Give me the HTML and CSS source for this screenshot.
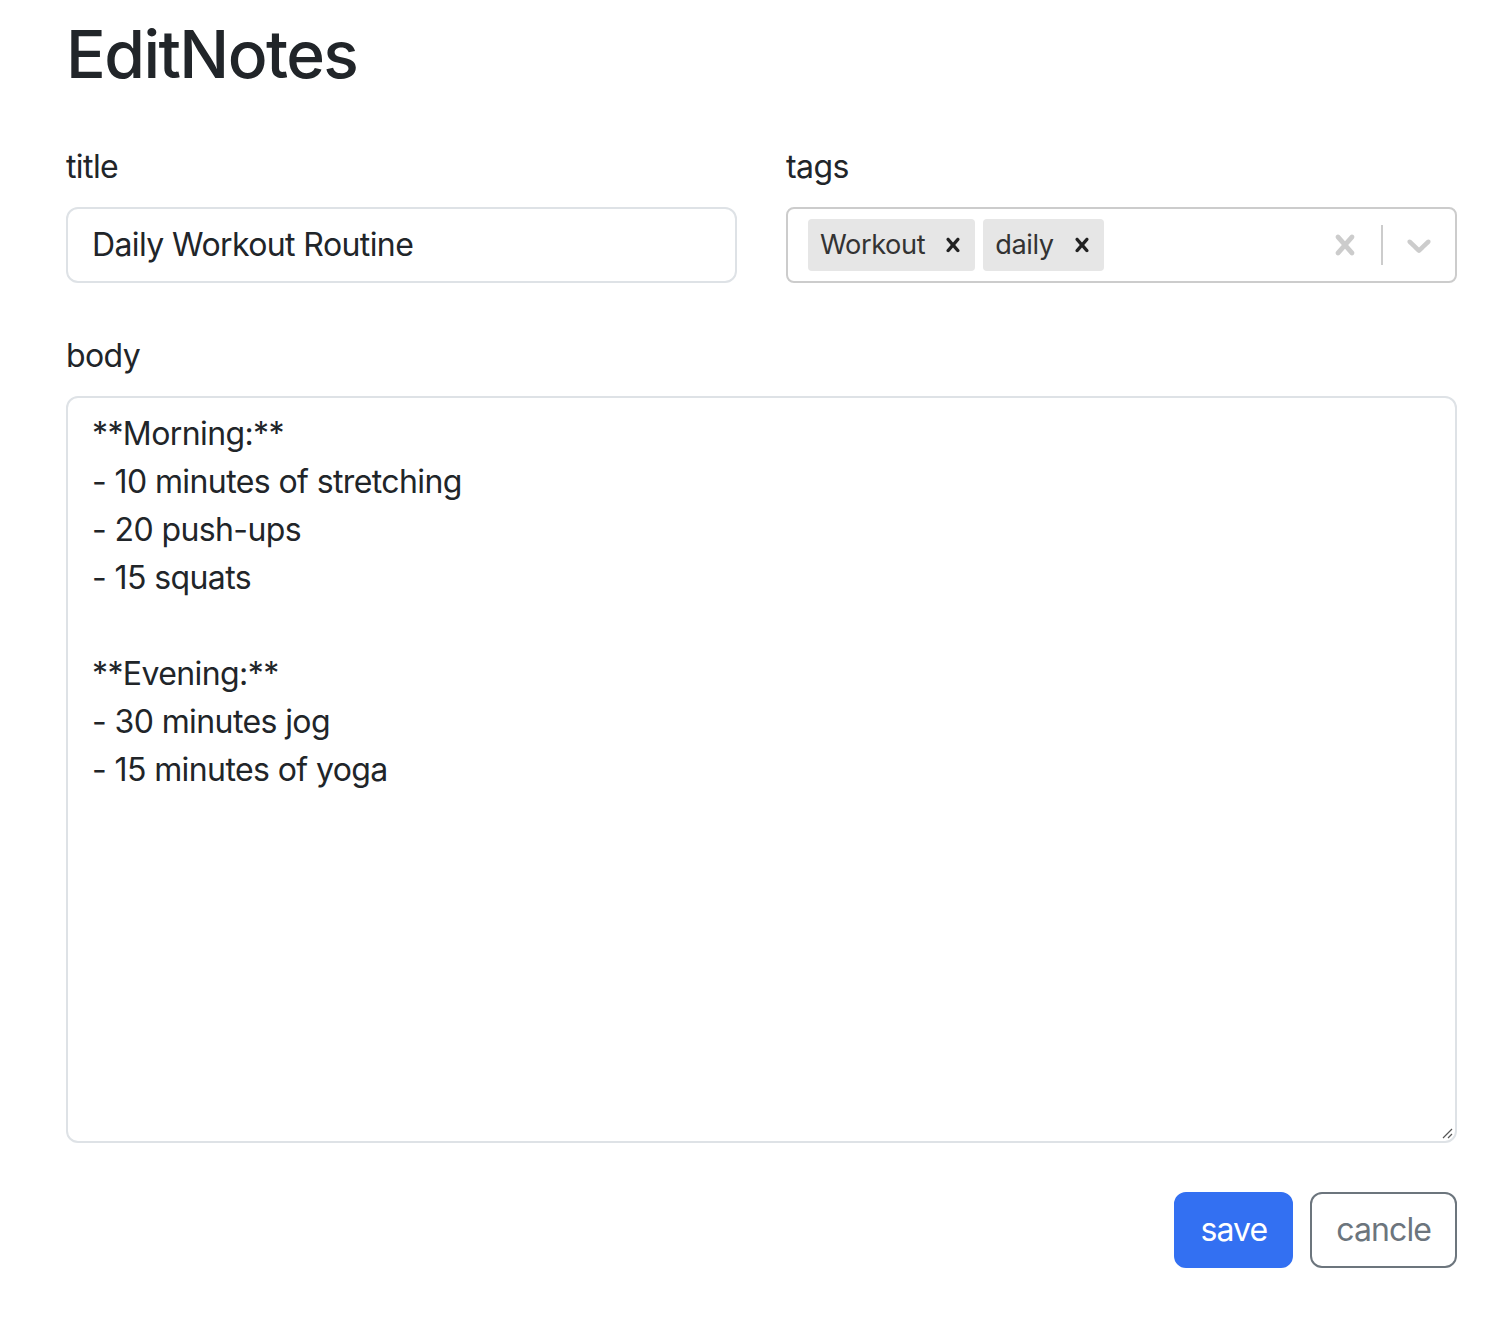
FILE: index.html
```html
<!DOCTYPE html>
<html lang="en">
<head>
<meta charset="utf-8">
<title>EditNotes</title>
<link rel="stylesheet" href="styles.css">
</head>
<body>
<div class="page">
  <h1 class="heading">EditNotes</h1>
  <div class="row">
    <div class="col">
      <label class="label">title</label>
      <div class="input">Daily Workout Routine</div>
    </div>
    <div class="col">
      <label class="label">tags</label>
      <div class="select">
        <div class="values">
          <div class="chip">
            <span class="chip-label">Workout</span>
            <span class="chip-remove"><svg viewBox="0 0 20 20" width="28" height="28"><path d="M14.348 14.849c-0.469 0.469-1.229 0.469-1.697 0l-2.651-3.030-2.651 3.029c-0.469 0.469-1.229 0.469-1.697 0-0.469-0.469-0.469-1.229 0-1.697l2.758-3.15-2.759-3.152c-0.469-0.469-0.469-1.228 0-1.697s1.228-0.469 1.697 0l2.652 3.031 2.651-3.031c0.469-0.469 1.228-0.469 1.697 0s0.469 1.229 0 1.697l-2.758 3.152 2.758 3.15c0.469 0.469 0.469 1.229 0 1.698z"/></svg></span>
          </div>
          <div class="chip">
            <span class="chip-label">daily</span>
            <span class="chip-remove"><svg viewBox="0 0 20 20" width="28" height="28"><path d="M14.348 14.849c-0.469 0.469-1.229 0.469-1.697 0l-2.651-3.030-2.651 3.029c-0.469 0.469-1.229 0.469-1.697 0-0.469-0.469-0.469-1.229 0-1.697l2.758-3.15-2.759-3.152c-0.469-0.469-0.469-1.228 0-1.697s1.228-0.469 1.697 0l2.652 3.031 2.651-3.031c0.469-0.469 1.228-0.469 1.697 0s0.469 1.229 0 1.697l-2.758 3.152 2.758 3.15c0.469 0.469 0.469 1.229 0 1.698z"/></svg></span>
          </div>
        </div>
        <div class="indicators">
          <span class="indicator"><svg viewBox="0 0 20 20" width="40" height="40"><path d="M14.348 14.849c-0.469 0.469-1.229 0.469-1.697 0l-2.651-3.030-2.651 3.029c-0.469 0.469-1.229 0.469-1.697 0-0.469-0.469-0.469-1.229 0-1.697l2.758-3.15-2.759-3.152c-0.469-0.469-0.469-1.228 0-1.697s1.228-0.469 1.697 0l2.652 3.031 2.651-3.031c0.469-0.469 1.228-0.469 1.697 0s0.469 1.229 0 1.697l-2.758 3.152 2.758 3.15c0.469 0.469 0.469 1.229 0 1.698z"/></svg></span>
          <span class="separator"></span>
          <span class="indicator"><svg viewBox="0 0 20 20" width="40" height="40"><path d="M4.516 7.548c0.436-0.446 1.043-0.481 1.576 0l3.908 3.747 3.908-3.747c0.533-0.481 1.141-0.446 1.574 0 0.436 0.445 0.408 1.197 0 1.615-0.406 0.418-4.695 4.502-4.695 4.502-0.217 0.223-0.502 0.335-0.787 0.335s-0.57-0.112-0.789-0.335c0 0-4.287-4.084-4.695-4.502s-0.436-1.170 0-1.615z"/></svg></span>
        </div>
      </div>
    </div>
  </div>
  <label class="label body-label">body</label>
  <div class="textarea">**Morning:**
- 10 minutes of stretching
- 20 push-ups
- 15 squats

**Evening:**
- 30 minutes jog
- 15 minutes of yoga<svg class="grip" viewBox="0 0 14 14" width="14" height="14"><path d="M13 4 L4 13 M13 9 L9 13" stroke="#555" stroke-width="1.2" fill="none"/></svg></div>
  <div class="actions">
    <button class="btn btn-primary">save</button>
    <button class="btn btn-outline">cancle</button>
  </div>
</div>
</body>
</html>
```
FILE: styles.css
```css
* { box-sizing: border-box; }
html, body { margin: 0; padding: 0; background: #fff; }
body {
  font-family: Inter, "Noto Sans", "Liberation Sans", sans-serif;
  font-size: 32px;
  line-height: 1.5;
  color: #212529;
  letter-spacing: -0.6px;
}
.page {
  padding: 15px 35px 0 66px;
}
.heading {
  font-size: 66px;
  font-weight: 500;
  line-height: 1.2;
  margin: 0 0 49px 0;
  letter-spacing: -1.6px;
}
.row {
  display: flex;
  gap: 49px;
}
.col { flex: 1; min-width: 0; }
.label {
  display: block;
  margin-bottom: 16px;
}
.input {
  height: 76px;
  border: 2px solid #dee2e6;
  border-radius: 12px;
  padding: 12px 24px;
  line-height: 48px;
}
.select {
  height: 76px;
  border: 2px solid #cccccc;
  border-radius: 8px;
  display: flex;
  align-items: center;
}
.values {
  flex: 1;
  display: flex;
  align-items: center;
  padding: 4px 16px;
}
.chip {
  display: flex;
  background: #e6e6e6;
  border-radius: 4px;
  margin: 4px;
  height: 52px;
  align-items: center;
}
.chip-label {
  font-size: 27.2px;
  color: #333333;
  padding: 6px 6px 6px 12px;
  line-height: 40px;
  letter-spacing: -0.4px;
}
.chip-remove {
  display: flex;
  align-items: center;
  padding: 0 8px;
  height: 100%;
  fill: #222222;
}
.indicators {
  display: flex;
  align-items: center;
  align-self: stretch;
}
.indicator {
  display: flex;
  padding: 16px;
  fill: #cccccc;
}
.separator {
  width: 2px;
  align-self: stretch;
  margin: 16px 0;
  background: #cccccc;
}
.body-label { margin-top: 49px; }
.textarea {
  position: relative;
  height: 747px;
  border: 2px solid #dee2e6;
  border-radius: 12px;
  padding: 12px 24px;
  white-space: pre-wrap;
}
.grip {
  position: absolute;
  right: 2px;
  bottom: 2px;
}
.actions {
  display: flex;
  justify-content: flex-end;
  gap: 17px;
  margin-top: 49px;
}
.btn {
  font-family: inherit;
  font-size: 32px;
  line-height: 48px;
  letter-spacing: -0.9px;
  padding: 12px 24px;
  border-radius: 12px;
  border: 2px solid transparent;
  background: #fff;
  height: 76px;
}
.btn-primary {
  background: #3370f2;
  border-color: #3370f2;
  color: #fff;
}
.btn-outline {
  border-color: #6c757d;
  color: #6c757d;
}
```
